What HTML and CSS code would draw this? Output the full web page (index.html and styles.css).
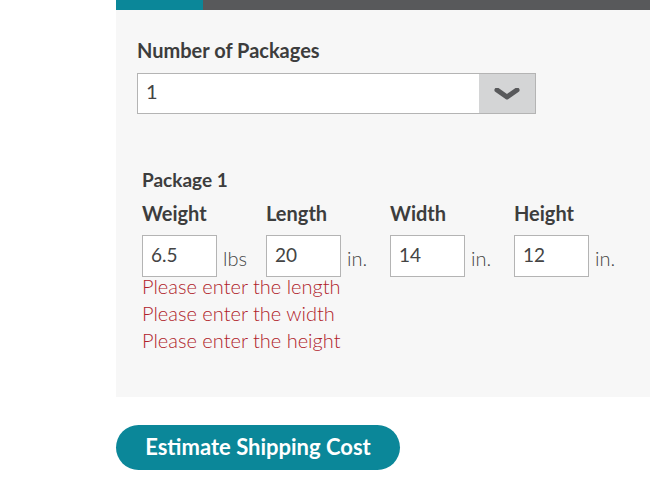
FILE: index.html
```html
<!DOCTYPE html>
<html lang="en">
<head>
    <meta charset="UTF-8">
    <meta name="viewport" content="width=device-width, initial-scale=1.0">
    <title>Shipping Estimate</title>
    <link rel="stylesheet" href="styles.css">
</head>
<body>
    <div class="wrap">
        <div class="tabbar"><span class="tab-active"></span></div>
        <div class="panel">
            <label class="field-label">Number of Packages</label>
            <div class="select">
                <span class="select-value">1</span>
                <span class="select-arrow">
                    <svg width="26" height="12" viewBox="0 0 26 12"><path d="M3 2 L13 9 L23 2" fill="none" stroke="#58595b" stroke-width="5" stroke-linejoin="round" stroke-linecap="round"/></svg>
                </span>
            </div>

            <div class="package">
                <h3>Package 1</h3>
                <div class="dims">
                    <div class="dim">
                        <div class="dim-label">Weight</div>
                        <div class="dim-row"><input type="text" value="6.5"><span class="unit">lbs</span></div>
                    </div>
                    <div class="dim">
                        <div class="dim-label">Length</div>
                        <div class="dim-row"><input type="text" value="20"><span class="unit">in.</span></div>
                    </div>
                    <div class="dim">
                        <div class="dim-label">Width</div>
                        <div class="dim-row"><input type="text" value="14"><span class="unit">in.</span></div>
                    </div>
                    <div class="dim">
                        <div class="dim-label">Height</div>
                        <div class="dim-row"><input type="text" value="12"><span class="unit">in.</span></div>
                    </div>
                </div>
                <div class="errors">
                    <div>Please enter the length</div>
                    <div>Please enter the width</div>
                    <div>Please enter the height</div>
                </div>
            </div>
        </div>
        <button class="estimate">Estimate Shipping Cost</button>
    </div>
</body>
</html>
```

FILE: styles.css
```css
body {
    margin: 0;
    background-color: #ffffff;
    font-family: 'Lato', 'Open Sans', sans-serif;
    color: #3d3d3d;
}
.wrap {
    margin-left: 116px;
}
.tabbar {
    height: 10px;
    background-color: #58595b; /* dark gray strip */
    display: flex;
}
.tab-active {
    width: 87px;
    background-color: #0b8799; /* teal */
}
.panel {
    background-color: #f7f7f7;
    padding: 28px 0 0 21px;
    height: 359px;
}
.field-label {
    display: block;
    font-weight: bold;
    font-size: 20px;
    color: #3d3d3d;
    margin-bottom: 11px;
}
.select {
    width: 397px;
    height: 39px;
    border: 1px solid #b4b4b4;
    background-color: #ffffff;
    display: flex;
    justify-content: space-between;
}
.select-value {
    padding: 5px 0 0 8px;
    font-size: 20px;
    color: #444444;
}
.select-arrow {
    width: 56px;
    background-color: #d4d5d6;
    display: flex;
    align-items: center;
    justify-content: center;
}
.package {
    margin: 54px 0 0 5px;
}
.package h3 {
    margin: 0 0 10px 0;
    font-size: 19px;
    color: #3d3d3d;
}
.dims {
    display: flex;
}
.dim {
    width: 124px;
}
.dim-label {
    font-weight: bold;
    font-size: 20px;
    margin-bottom: 10px;
}
.dim-row {
    display: flex;
    align-items: center;
}
.dim-row input {
    box-sizing: border-box;
    width: 75px;
    height: 42px;
    border: 1px solid #b4b4b4;
    padding: 0 0 4px 8px;
    font-family: inherit;
    font-size: 19px;
    color: #444444;
    outline: none;
}
.unit {
    margin: 4px 0 0 6px;
    font-size: 20px;
    font-weight: 300;
    color: #444444;
}
.errors {
    color: #b0222a;
    font-size: 20px;
    font-weight: 300;
    line-height: 27px;
    margin-top: -4px;
}
.estimate {
    margin-top: 28px;
    width: 284px;
    height: 45px;
    border: none;
    border-radius: 23px;
    background-color: #0b8799;
    color: #ffffff;
    font-family: inherit;
    font-weight: bold;
    font-size: 22px;
    padding: 0 0 3px 0;
    cursor: pointer;
}
```
